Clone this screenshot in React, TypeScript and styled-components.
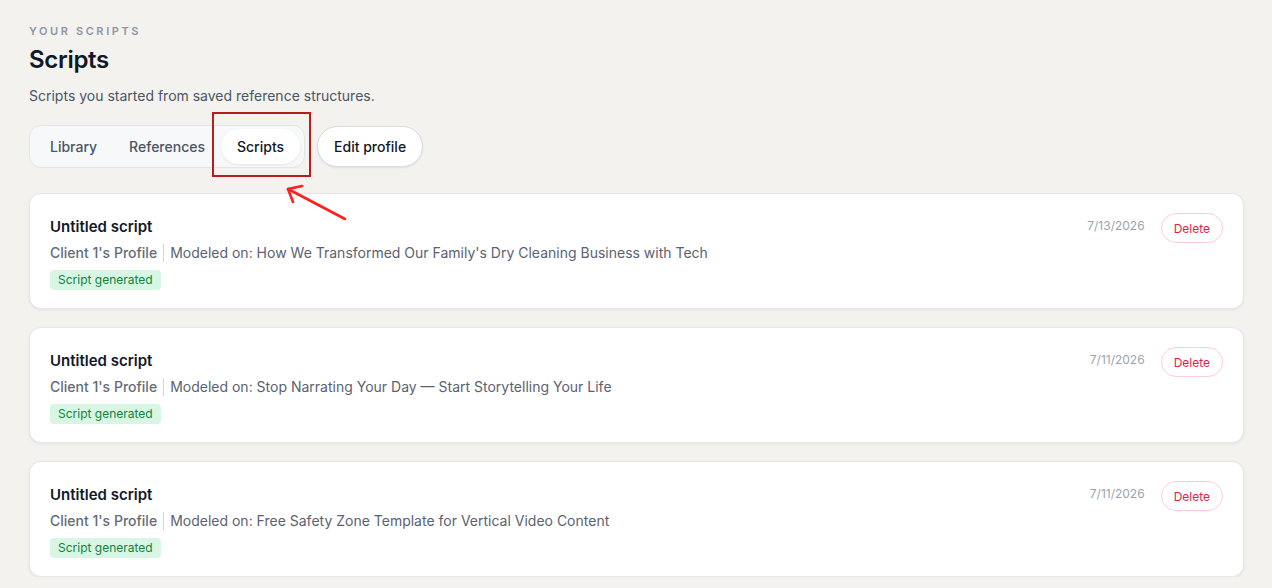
import React from 'react'
import styled, { createGlobalStyle } from 'styled-components'

interface IScript { id: number, title: string, profile: string, modeledOn: string, date: string }

const scripts: Array<IScript> = [
  { id: 1, title: 'Untitled script', profile: "Client 1's Profile", modeledOn: "How We Transformed Our Family's Dry Cleaning Business with Tech", date: '7/13/2026' },
  { id: 2, title: 'Untitled script', profile: "Client 1's Profile", modeledOn: 'Stop Narrating Your Day — Start Storytelling Your Life', date: '7/11/2026' },
  { id: 3, title: 'Untitled script', profile: "Client 1's Profile", modeledOn: 'Free Safety Zone Template for Vertical Video Content', date: '7/11/2026' },
]

const GlobalStyle = createGlobalStyle`
  body {
    margin: 0;
    background: #f3f2ef;
    font-family: Inter, "Liberation Sans", sans-serif;
    color: #111827;
  }
`

const Page = styled.div`
  position: relative;
  padding: 24px 28px 0 29px;
`

const Eyebrow = styled.div`
  font-size: 11px;
  letter-spacing: 2.6px;
  text-transform: uppercase;
  color: #8e97a4;
  font-weight: 600;
  line-height: 14px;
`

const Title = styled.h1`
  margin: 7px 0 0 0;
  font-size: 24px;
  font-weight: 600;
  line-height: 30px;
  letter-spacing: -0.3px;
  color: #111827;
`

const Lead = styled.p`
  margin: 12px 0 0;
  font-size: 14px;
  line-height: 18px;
  color: #4b5563;
`

const Toolbar = styled.div`
  display: flex;
  align-items: center;
  gap: 12px;
  margin-top: 20px;
`

const TabGroup = styled.div`
  display: flex;
  align-items: center;
  padding: 3px 4px;
  background: #f7f8fa;
  border: 1px solid #e3e5e8;
  border-radius: 12px;
`

const Tab = styled.button<{ active?: boolean }>`
  font-family: inherit;
  font-size: 14px;
  font-weight: 500;
  height: 35px;
  padding: 0 16px;
  border: none;
  border-radius: 999px;
  cursor: pointer;
  background: ${(p) => (p.active ? '#ffffff' : 'transparent')};
  color: ${(p) => (p.active ? '#111827' : '#4b5563')};
  box-shadow: ${(p) => (p.active ? '0 1px 3px rgba(0,0,0,0.08)' : 'none')};
`

const PillButton = styled.button`
  font-family: inherit;
  font-size: 14px;
  font-weight: 500;
  height: 41px;
  padding: 0 16px;
  background: #ffffff;
  color: #111827;
  border: 1px solid #d9dbde;
  border-radius: 999px;
  box-shadow: 0 1px 2px rgba(0,0,0,0.08);
`

const List = styled.div`
  display: flex;
  flex-direction: column;
  gap: 18px;
  margin-top: 25px;
`

const Card = styled.div`
  display: flex;
  justify-content: space-between;
  align-items: flex-start;
  padding: 20px;
  height: 116px;
  box-sizing: border-box;
  background: #ffffff;
  border: 1px solid #e6e7ea;
  border-radius: 12px;
  box-shadow: 0 1px 3px rgba(0,0,0,0.07);
`

const CardBody = styled.div`
  display: flex;
  flex-direction: column;
`

const CardTitle = styled.div`
  font-size: 15px;
  font-weight: 600;
  line-height: 22px;
  margin-top: 2px;
  color: #111827;
`

const Meta = styled.div`
  display: flex;
  align-items: center;
  margin-top: 5px;
  font-size: 14px;
  line-height: 20px;
  color: #5b6270;
`

const Profile = styled.span`
  color: #646b78;
  font-weight: 500;
`

const Divider = styled.span`
  width: 1px;
  height: 18px;
  background: #d1d5db;
  margin: 0 6px;
`

const Badge = styled.span`
  align-self: flex-start;
  margin-top: 7px;
  padding: 2px 8px;
  font-size: 12px;
  line-height: 16px;
  color: #15803d;
  background: #d7f7e4;
  border-radius: 4px;
`

const Side = styled.div`
  display: flex;
  align-items: flex-start;
  gap: 16px;
`

const DateText = styled.span`
  font-size: 12px;
  line-height: 16px;
  margin-top: 4px;
  color: #9ca3af;
`

const DeleteButton = styled.button`
  font-family: inherit;
  font-size: 12px;
  height: 30px;
  margin-top: -1px;
  padding: 0 12px;
  background: #ffffff;
  color: #e11d48;
  border: 1px solid #fecdd3;
  border-radius: 999px;
`

const Annotation = styled.svg`
  position: absolute;
  left: 0;
  top: 0;
  pointer-events: none;
`

function ScriptCard(props: { script: IScript }) {
  const s = props.script
  return (
    <Card>
      <CardBody>
        <CardTitle>{s.title}</CardTitle>
        <Meta>
          <Profile>{s.profile}</Profile>
          <Divider />
          <span>Modeled on: {s.modeledOn}</span>
        </Meta>
        <Badge>Script generated</Badge>
      </CardBody>
      <Side>
        <DateText>{s.date}</DateText>
        <DeleteButton>Delete</DeleteButton>
      </Side>
    </Card>
  )
}

export default function App() {
  return (
    <Page>
      <GlobalStyle />
      <Eyebrow>Your scripts</Eyebrow>
      <Title>Scripts</Title>
      <Lead>Scripts you started from saved reference structures.</Lead>
      <Toolbar>
        <TabGroup>
          <Tab>Library</Tab>
          <Tab>References</Tab>
          <Tab active>Scripts</Tab>
        </TabGroup>
        <PillButton>Edit profile</PillButton>
      </Toolbar>
      <List>
        {scripts.map((s) => <ScriptCard key={s.id} script={s} />)}
      </List>
      {/* highlight box + arrow pointing at the active tab */}
      <Annotation width="400" height="240">
        <rect x="213" y="113" width="97" height="63" fill="none" stroke="#b91c1c" strokeWidth="2" />
        <line x1="345" y1="219" x2="288" y2="189" stroke="#ff1f1f" strokeWidth="2.6" strokeLinecap="round" />
        <polyline points="302,186 288,189 293,202" fill="none" stroke="#ff1f1f" strokeWidth="2.6" strokeLinecap="round" strokeLinejoin="round" />
      </Annotation>
    </Page>
  )
}
